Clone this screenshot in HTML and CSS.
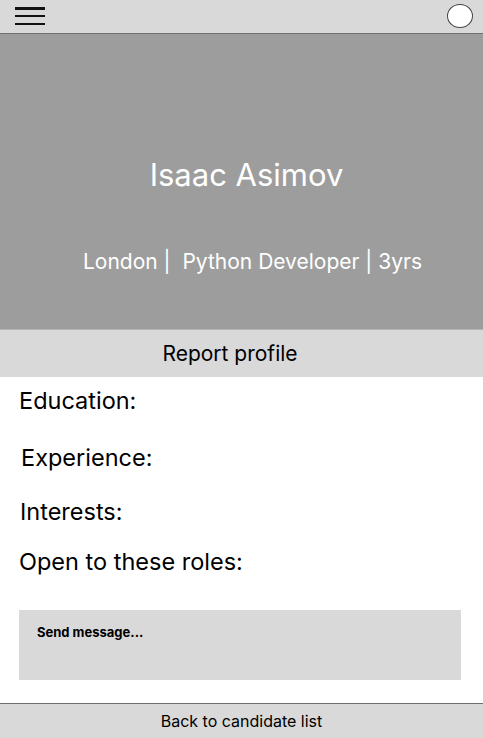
FILE: index.html
```html
<!DOCTYPE html>
<html lang="en">
<head>
<meta charset="utf-8">
<title>Isaac Asimov</title>
<link rel="stylesheet" href="styles.css">
</head>
<body>
<div class="app">
  <header class="topbar">
    <button class="menu" aria-label="Menu">
      <span></span><span></span><span></span>
    </button>
    <span class="avatar"></span>
  </header>
  <section class="hero">
    <h1 class="name">Isaac Asimov</h1>
    <p class="meta">London |&nbsp; Python Developer | 3yrs</p>
  </section>
  <div class="report">Report profile</div>
  <main class="details">
    <h2 class="label l-edu">Education:</h2>
    <h2 class="label l-exp">Experience:</h2>
    <h2 class="label l-int">Interests:</h2>
    <h2 class="label l-roles">Open to these roles:</h2>
    <div class="message">Send message...</div>
  </main>
  <footer class="bottombar">Back to candidate list</footer>
</div>
</body>
</html>
```
FILE: styles.css
```css
* { box-sizing: border-box; }
html, body { margin: 0; padding: 0; }
body {
  font-family: Inter, "Noto Sans", "Liberation Sans", sans-serif;
  color: #000;
  background: #fff;
}
.app {
  width: 483px;
  height: 738px;
  display: flex;
  flex-direction: column;
  overflow: hidden;
}
.topbar {
  height: 34px;
  background: #d9d9d9;
  border-bottom: 1px solid #6e6e6e;
  display: flex;
  align-items: center;
  justify-content: space-between;
  padding: 0 10px 0 15px;
  flex: none;
}
.menu {
  border: 0;
  background: transparent;
  padding: 0;
  width: 30px;
  height: 18px;
  display: flex;
  flex-direction: column;
  justify-content: space-between;
  margin-top: -1px;
}
.menu span {
  display: block;
  height: 2.5px;
  background: #111;
}
.avatar {
  width: 26px;
  height: 24px;
  border-radius: 50%;
  background: #fff;
  border: 1px solid #444;
  margin-top: -1px;
}
.hero {
  height: 296px;
  background: #9d9d9d;
  border-bottom: 1px solid #b4b4b4;
  color: #fff;
  text-align: center;
  flex: none;
  padding-top: 121px;
}
.name {
  margin: 0;
  font-weight: 400;
  font-size: 31px;
  line-height: 40px;
  padding-left: 10px;
}
.meta {
  margin: 54px 0 0;
  font-size: 21px;
  line-height: 26px;
  padding-left: 22px;
}
.report {
  height: 47px;
  background: #d9d9d9;
  font-size: 21px;
  display: flex;
  align-items: center;
  justify-content: center;
  padding-right: 23px;
  flex: none;
}
.details {
  flex: 1;
  padding: 0 22px 0 19px;
  display: flex;
  flex-direction: column;
}
.label {
  margin: 0;
  font-weight: 400;
  font-size: 23.5px;
  line-height: 28px;
}
.l-edu { margin-top: 10px; }
.l-exp { margin-top: 29px; padding-left: 2px; }
.l-int { margin-top: 26px; padding-left: 1px; }
.l-roles { margin-top: 22px; }
.message {
  margin-top: 34px;
  height: 70px;
  background: #d9d9d9;
  font-size: 13px;
  font-weight: 700;
  padding: 14px 18px;
}
.bottombar {
  height: 35px;
  background: #d9d9d9;
  border-top: 1px solid #6e6e6e;
  font-size: 16px;
  display: flex;
  align-items: center;
  justify-content: center;
  flex: none;
}
```
